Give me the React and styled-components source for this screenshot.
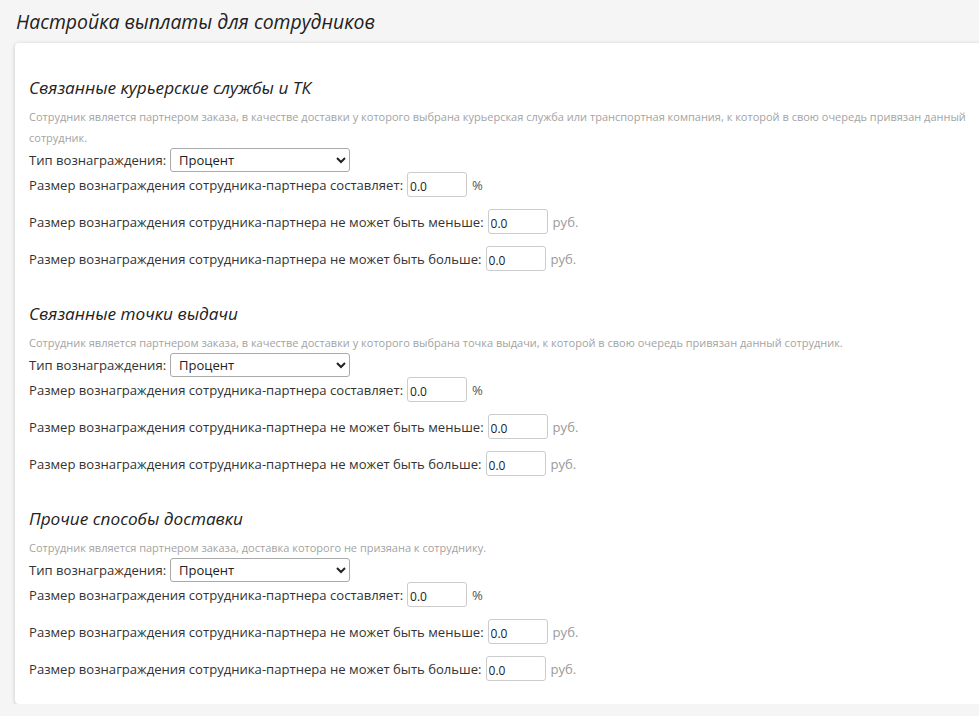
import React from 'react'
import styled, { createGlobalStyle } from 'styled-components'

const GlobalStyle = createGlobalStyle`
  html, body {
    margin: 0;
    overflow: hidden;
    background: #f5f5f5;
    font-family: "Open Sans", "Liberation Sans", sans-serif;
    color: #333;
  }
`

const Page = styled.div`
  padding: 9px 0 0 15px;
`

const PageTitle = styled.h1`
  margin: 0 0 8px 1px;
  font-size: 19.4px;
  font-weight: 400;
  font-style: italic;
  line-height: 26px;
  color: #222;
  white-space: nowrap;
`

const Card = styled.div`
  width: 990px;
  box-sizing: border-box;
  padding: 2px 14px 23px;
  background: #fff;
  border-radius: 4px;
  box-shadow: 0 1px 4px rgba(0, 0, 0, 0.2);
`

const Section = styled.section`
  padding-top: 30px;
`

const SectionTitle = styled.h2`
  margin: 0 0 5px;
  font-size: 17.2px;
  font-weight: 400;
  font-style: italic;
  line-height: 26px;
  color: #222;
`

const Hint = styled.div`
  font-size: 11px;
  line-height: 21px;
  color: #a3a3a3;
`

const Row = styled.div`
  display: flex;
  align-items: center;
  gap: 4px;
  height: ${props => (props.select ? '24px' : '25px')};
  margin-top: ${props => (props.spaced ? '12px' : '0')};
  font-size: 13.1px;
  white-space: nowrap;
`

const Select = styled.select`
  width: 180px;
  height: 24px;
  padding: 0 4px;
  font-family: inherit;
  font-size: 13px;
  color: #222;
  background: #fff;
  border: 1px solid #aaa;
  border-radius: 3px;
`

const Input = styled.input`
  width: 60px;
  height: 25px;
  box-sizing: border-box;
  padding: 4px 2px 0;
  font-family: inherit;
  font-size: 12px;
  color: #222;
  border: 1px solid #ccc;
  border-radius: 3px;
`

const Unit = styled.span`
  margin-left: 1px;
  color: ${props => (props.muted ? '#9a9a9a' : '#555')};
`

const sections = [
  {
    title: 'Связанные курьерские службы и ТК',
    hint:
      'Сотрудник является партнером заказа, в качестве доставки у которого выбрана курьерская служба или транспортная компания, к которой в свою очередь привязан данный сотрудник.',
  },
  {
    title: 'Связанные точки выдачи',
    hint:
      'Сотрудник является партнером заказа, в качестве доставки у которого выбрана точка выдачи, к которой в свою очередь привязан данный сотрудник.',
  },
  {
    title: 'Прочие способы доставки',
    hint: 'Сотрудник является партнером заказа, доставка которого не призяана к сотруднику.',
  },
]

const PayoutSection = ({ title, hint }) => (
  <Section>
    <SectionTitle>{title}</SectionTitle>
    <Hint>{hint}</Hint>
    <Row select>
      Тип вознаграждения:
      <Select defaultValue="percent">
        <option value="percent">Процент</option>
        <option value="fixed">Фиксированная сумма</option>
      </Select>
    </Row>
    <Row>
      Размер вознаграждения сотрудника-партнера составляет:
      <Input defaultValue="0.0" />
      <Unit>%</Unit>
    </Row>
    <Row spaced>
      Размер вознаграждения сотрудника-партнера не может быть меньше:
      <Input defaultValue="0.0" />
      <Unit muted>руб.</Unit>
    </Row>
    <Row spaced>
      Размер вознаграждения сотрудника-партнера не может быть больше:
      <Input defaultValue="0.0" />
      <Unit muted>руб.</Unit>
    </Row>
  </Section>
)

const App = () => (
  <>
    <GlobalStyle />
    <Page>
      <PageTitle>Настройка выплаты для сотрудников</PageTitle>
      <Card>
        {sections.map(s => (
          <PayoutSection key={s.title} {...s} />
        ))}
      </Card>
    </Page>
  </>
)

export default App
